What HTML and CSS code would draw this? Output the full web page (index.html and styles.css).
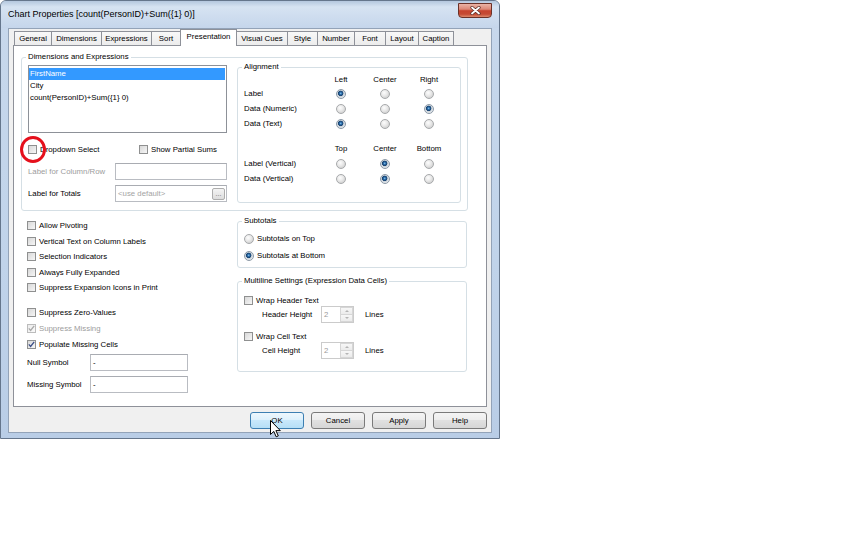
FILE: index.html
```html
<!DOCTYPE html>
<html>
<head>
<meta charset="utf-8">
<title>Chart Properties</title>
<link rel="stylesheet" href="styles.css">
</head>
<body>
<div class="window">
  <div class="titlebar">
    <span class="title">Chart Properties [count(PersonID)+Sum({1} 0)]</span>
    <div class="close">
      <svg width="11" height="9" viewBox="0 0 11 9"><path d="M2 1.5 L9 7.5 M9 1.5 L2 7.5" stroke="#5a2a22" stroke-width="3.2" stroke-linecap="round"/><path d="M2 1.5 L9 7.5 M9 1.5 L2 7.5" stroke="#ffffff" stroke-width="1.8" stroke-linecap="round"/></svg>
    </div>
  </div>
  <div class="client">
    <div class="tabs">
      <div class="tab t-general">General</div>
      <div class="tab t-dims">Dimensions</div>
      <div class="tab t-expr">Expressions</div>
      <div class="tab t-sort">Sort</div>
      <div class="tab t-pres active">Presentation</div>
      <div class="tab t-cues">Visual Cues</div>
      <div class="tab t-style">Style</div>
      <div class="tab t-number">Number</div>
      <div class="tab t-font">Font</div>
      <div class="tab t-layout">Layout</div>
      <div class="tab t-caption">Caption</div>
    </div>
    <div class="panel">
      <fieldset class="group dims">
        <legend>Dimensions and Expressions</legend>
        <div class="dims-left">
          <div class="listbox">
            <div class="item selected">FirstName</div>
            <div class="item">City</div>
            <div class="item">count(PersonID)+Sum({1} 0)</div>
          </div>
          <div class="check-row">
            <div class="opt"><span class="cb"><span class="ring"></span></span>Dropdown Select</div>
            <div class="opt"><span class="cb"></span>Show Partial Sums</div>
          </div>
          <div class="field-row">
            <span class="field-label disabled">Label for Column/Row</span>
            <div class="textbox"></div>
          </div>
          <div class="field-row totals">
            <span class="field-label">Label for Totals</span>
            <div class="textbox">
              <span class="placeholder">&lt;use default&gt;</span>
              <span class="dots-btn">...</span>
            </div>
          </div>
        </div>
        <fieldset class="group align">
          <legend>Alignment</legend>
          <div class="align-grid">
            <span></span><span class="hd">Left</span><span class="hd">Center</span><span class="hd">Right</span>
            <span class="rl">Label</span><span class="rb on"></span><span class="rb"></span><span class="rb"></span>
            <span class="rl">Data (Numeric)</span><span class="rb"></span><span class="rb"></span><span class="rb on"></span>
            <span class="rl">Data (Text)</span><span class="rb on"></span><span class="rb"></span><span class="rb"></span>
            <span class="gap"></span>
            <span></span><span class="hd">Top</span><span class="hd">Center</span><span class="hd">Bottom</span>
            <span class="rl">Label (Vertical)</span><span class="rb"></span><span class="rb on"></span><span class="rb"></span>
            <span class="rl">Data (Vertical)</span><span class="rb"></span><span class="rb on"></span><span class="rb"></span>
          </div>
        </fieldset>
      </fieldset>

      <div class="lower">
        <div class="lower-left">
          <div class="opt-list first">
            <div class="opt"><span class="cb"></span>Allow Pivoting</div>
            <div class="opt"><span class="cb"></span>Vertical Text on Column Labels</div>
            <div class="opt"><span class="cb"></span>Selection Indicators</div>
            <div class="opt"><span class="cb"></span>Always Fully Expanded</div>
            <div class="opt"><span class="cb"></span>Suppress Expansion Icons in Print</div>
          </div>
          <div class="opt-list second">
            <div class="opt"><span class="cb"></span>Suppress Zero-Values</div>
            <div class="opt disabled"><span class="cb checked off"><svg width="7" height="7" viewBox="0 0 7 7"><path d="M0.8 3.4 L2.6 5.4 L6.2 0.9" fill="none" stroke="#a8a8a8" stroke-width="1.3"/></svg></span>Suppress Missing</div>
            <div class="opt"><span class="cb checked"><svg width="7" height="7" viewBox="0 0 7 7"><path d="M0.8 3.4 L2.6 5.4 L6.2 0.9" fill="none" stroke="#3a4d86" stroke-width="1.3"/></svg></span>Populate Missing Cells</div>
          </div>
          <div class="symbol-row">
            <span class="symbol-label">Null Symbol</span>
            <div class="textbox sym">-</div>
          </div>
          <div class="symbol-row">
            <span class="symbol-label">Missing Symbol</span>
            <div class="textbox sym">-</div>
          </div>
        </div>
        <div class="lower-right">
          <fieldset class="group subtotals">
            <legend>Subtotals</legend>
            <div class="radio-row"><span class="rb"></span>Subtotals on Top</div>
            <div class="radio-row"><span class="rb on"></span>Subtotals at Bottom</div>
          </fieldset>
          <fieldset class="group multiline">
            <legend>Multiline Settings (Expression Data Cells)</legend>
            <div class="opt ml-check"><span class="cb"></span>Wrap Header Text</div>
            <div class="spin-row">
              <span class="spin-label">Header Height</span>
              <div class="spin"><span class="spin-val">2</span><span class="spin-btns"><span class="spin-up"><i class="tri up"></i></span><span class="spin-down"><i class="tri down"></i></span></span></div>
              <span class="lines">Lines</span>
            </div>
            <div class="opt ml-check second-check"><span class="cb"></span>Wrap Cell Text</div>
            <div class="spin-row">
              <span class="spin-label">Cell Height</span>
              <div class="spin"><span class="spin-val">2</span><span class="spin-btns"><span class="spin-up"><i class="tri up"></i></span><span class="spin-down"><i class="tri down"></i></span></span></div>
              <span class="lines">Lines</span>
            </div>
          </fieldset>
        </div>
      </div>
    </div>
    <div class="buttons">
      <div class="btn default">OK
        <svg class="cursor" width="12" height="19" viewBox="0 0 12 19"><path d="M0.5 0.5 L0.5 14.5 L3.8 11.4 L6.2 16.8 L8.3 15.9 L5.9 10.6 L10.3 10.6 Z" fill="#ffffff" stroke="#000000" stroke-width="1" stroke-linejoin="miter"/></svg>
      </div>
      <div class="btn">Cancel</div>
      <div class="btn">Apply</div>
      <div class="btn">Help</div>
    </div>
  </div>
</div>
</body>
</html>
```

FILE: styles.css
```css
* { box-sizing: border-box; }

body {
  margin: 0;
  background: #ffffff;
  font-family: "Liberation Sans", Arial, sans-serif;
  font-size: 7.8px;
  color: #000000;
}

/* ---------- window frame ---------- */
.window {
  width: 500px;
  height: 439px;
  border: 1px solid #65768c;
  border-radius: 6px 6px 0 0;
  background: linear-gradient(#c8d8ec, #c0d3ea 60%, #b9cde6);
  display: flex;
  flex-direction: column;
}

.titlebar {
  height: 27px;
  flex: none;
  display: flex;
  justify-content: space-between;
  padding-left: 7px;
  border-radius: 5px 5px 0 0;
  background: linear-gradient(#b4c7de 0, #d6e3f2 22%, #cfddef 55%, #c5d6eb 100%);
}

.title {
  line-height: 27px;
  font-size: 9px;
  color: #000;
}

.close {
  width: 34px;
  height: 15px;
  margin: 2px 7px 0 0;
  border: 1px solid #6b3128;
  border-radius: 0 0 4px 4px;
  background: linear-gradient(#eab3a6 0, #dc8877 40%, #c7442f 52%, #c54a34 78%, #dd8a6c 100%);
  display: flex;
  align-items: center;
  justify-content: center;
}

.client {
  flex: 1;
  margin: 0 7px 5px;
  border: 1px solid #93a3b8;
  background: #f0f0f0;
  padding: 0 4px;
  display: flex;
  flex-direction: column;
}

/* ---------- tabs ---------- */
.tabs {
  height: 16px;
  flex: none;
  display: flex;
  align-items: flex-end;
  padding-left: 1px;
}

.tab {
  height: 14px;
  border: 1px solid #8e9199;
  border-bottom: none;
  margin-right: -1px;
  background: linear-gradient(#f8f8f8, #ececec);
  text-align: center;
  line-height: 12px;
  padding-top: 1px;
  white-space: nowrap;
}

.tab.active {
  height: 17px;
  margin-bottom: -1px;
  background: #ffffff;
  position: relative;
  z-index: 1;
}

.t-general { width: 38px; }
.t-dims { width: 51px; }
.t-expr { width: 51px; }
.t-sort { width: 30px; }
.t-pres { width: 57px; }
.t-cues { width: 52px; }
.t-style { width: 31px; }
.t-number { width: 38px; }
.t-font { width: 32px; }
.t-layout { width: 34px; }
.t-caption { width: 36px; }

/* ---------- panel ---------- */
.panel {
  height: 362px;
  flex: none;
  border: 1px solid #8e9199;
  background: #ffffff;
  padding: 6px 18px 0 7px;
}

.group {
  margin: 0;
  min-width: 0;
  border: 1px solid #d5dfe5;
  border-radius: 3px;
}

.group > legend {
  padding: 0 2px;
  margin-left: -2px;
  line-height: 10px;
  height: 10px;
}

.dims {
  display: flex;
  gap: 10px;
  padding: 0 6px 7px;
}

.dims-left {
  width: 199px;
  display: flex;
  flex-direction: column;
}

.listbox {
  margin-top: 3px;
  height: 68px;
  border: 1px solid #8d9198;
  background: #fff;
  padding-top: 2px;
}

.item {
  height: 12px;
  line-height: 12px;
  padding-left: 1px;
  white-space: nowrap;
}

.item.selected {
  background: #3399ff;
  color: #ffffff;
  margin-right: 1px;
}

.check-row {
  margin-top: 10px;
  height: 12px;
  display: grid;
  grid-template-columns: 111px auto;
}

.opt {
  display: flex;
  align-items: center;
  white-space: nowrap;
}

.cb {
  width: 9px;
  height: 9px;
  flex: none;
  margin-right: 3px;
  border: 1px solid #8f9090;
  background: linear-gradient(135deg, #d8d8d8, #f6f6f6);
  position: relative;
  display: inline-flex;
  align-items: center;
  justify-content: center;
}

.cb.off {
  border-color: #bcbcbc;
  background: linear-gradient(135deg, #ececec, #fafafa);
}

.ring {
  position: absolute;
  left: -9px;
  top: -10px;
  width: 26px;
  height: 27px;
  border: 3.5px solid #e5101c;
  border-radius: 50%;
}

.field-row {
  display: flex;
  align-items: center;
  margin-top: 8px;
  height: 17px;
}

.field-row.totals {
  margin-top: 5px;
}

.field-label {
  width: 87px;
  flex: none;
  white-space: nowrap;
}

.disabled {
  color: #9c9c9c;
}

.textbox {
  flex: 1;
  height: 17px;
  border: 1px solid #b9bcc2;
  border-top-color: #a9acb2;
  background: #ffffff;
  display: flex;
  align-items: center;
  justify-content: space-between;
  padding-left: 2px;
}

.placeholder {
  color: #a4a4a4;
}

.dots-btn {
  width: 13px;
  height: 12px;
  margin-right: 1px;
  border: 1px solid #adadad;
  border-radius: 2px;
  background: linear-gradient(#f4f4f4, #dddddd);
  color: #6a6a6a;
  font-size: 7px;
  line-height: 9px;
  text-align: center;
}

/* ---------- alignment ---------- */
.align {
  width: 224px;
  flex: none;
  padding: 0 6px 16px;
}

.align-grid {
  display: grid;
  grid-template-columns: 75px 44px 44px 44px;
  grid-template-rows: 14px 15px 15px 15px 10px 15px 15px 15px;
  align-items: center;
}

.hd {
  text-align: center;
}

.rl {
  white-space: nowrap;
}

.gap {
  grid-column: 1 / -1;
}

.rb {
  width: 10px;
  height: 10px;
  border-radius: 50%;
  border: 1px solid #a7a9ab;
  background: radial-gradient(circle at 40% 35%, #fdfdfd 0, #e9e9e9 3px, #d6d6d6 5px);
  justify-self: center;
  flex: none;
}

.rb.on {
  border-color: #8c99a6;
  background: radial-gradient(circle at 46% 42%, #86c4ee 0, #2a6ba8 1.2px, #163f6c 2.4px, #c9d2da 3px, #eef0f2 5px);
}

/* ---------- lower section ---------- */
.lower {
  display: flex;
  padding-left: 6px;
}

.lower-left {
  width: 210px;
  flex: none;
  padding-top: 7px;
}

.opt-list.first .opt {
  height: 15.5px;
}

.opt-list.second {
  margin-top: 8.5px;
}

.opt-list.second .opt {
  height: 16px;
}

.symbol-row {
  display: flex;
  align-items: center;
  margin-top: 5px;
  height: 17px;
}

.opt-list.second + .symbol-row {
  margin-top: 2px;
}

.symbol-label {
  width: 63px;
  flex: none;
}

.textbox.sym {
  flex: none;
  width: 98px;
  justify-content: flex-start;
}

.lower-right {
  width: 230px;
  flex: none;
}

.subtotals {
  margin-top: 5px;
  padding: 4px 6px 3px;
}

.radio-row {
  height: 17px;
  display: flex;
  align-items: center;
  white-space: nowrap;
}

.radio-row .rb {
  margin-right: 3px;
}

.multiline {
  margin-top: 8px;
  padding: 8px 6px 12px;
}

.ml-check {
  height: 12px;
}

.ml-check.second-check {
  margin-top: 7px;
}

.spin-row {
  height: 17px;
  display: flex;
  align-items: center;
  padding-left: 18px;
}

.spin-label {
  width: 59px;
  flex: none;
  white-space: nowrap;
}

.spin {
  width: 33px;
  height: 17px;
  border: 1px solid #cbcbcb;
  background: #ffffff;
  display: flex;
  justify-content: space-between;
}

.spin-val {
  color: #9a9a9a;
  line-height: 15px;
  padding-left: 2px;
}

.spin-btns {
  width: 13px;
  display: flex;
  flex-direction: column;
}

.spin-up,
.spin-down {
  flex: 1;
  border: 1px solid #d6d6d6;
  background: linear-gradient(#f7f7f7, #ebebeb);
  display: flex;
  align-items: center;
  justify-content: center;
}

.spin-down {
  border-top: none;
}

.tri {
  width: 0;
  height: 0;
  border-left: 2px solid transparent;
  border-right: 2px solid transparent;
}

.tri.up {
  border-bottom: 2px solid #b4b4b4;
}

.tri.down {
  border-top: 2px solid #b4b4b4;
}

.lines {
  margin-left: 11px;
}

/* ---------- buttons ---------- */
.buttons {
  display: flex;
  justify-content: flex-end;
  gap: 7px;
  margin-top: 5px;
  height: 17px;
}

.btn {
  width: 54px;
  height: 17px;
  border: 1px solid #7a7a7a;
  border-radius: 3px;
  background: linear-gradient(#f4f4f4, #ececec 50%, #e0e0e0 50%, #d6d6d6);
  line-height: 15px;
  text-align: center;
}

.btn.default {
  position: relative;
  border-color: #3d7fb2;
  background: linear-gradient(#eef7fd, #dcf0fc 50%, #c8e8fb 50%, #b6dff6);
}

.cursor {
  position: absolute;
  left: 19px;
  top: 7px;
}
```
